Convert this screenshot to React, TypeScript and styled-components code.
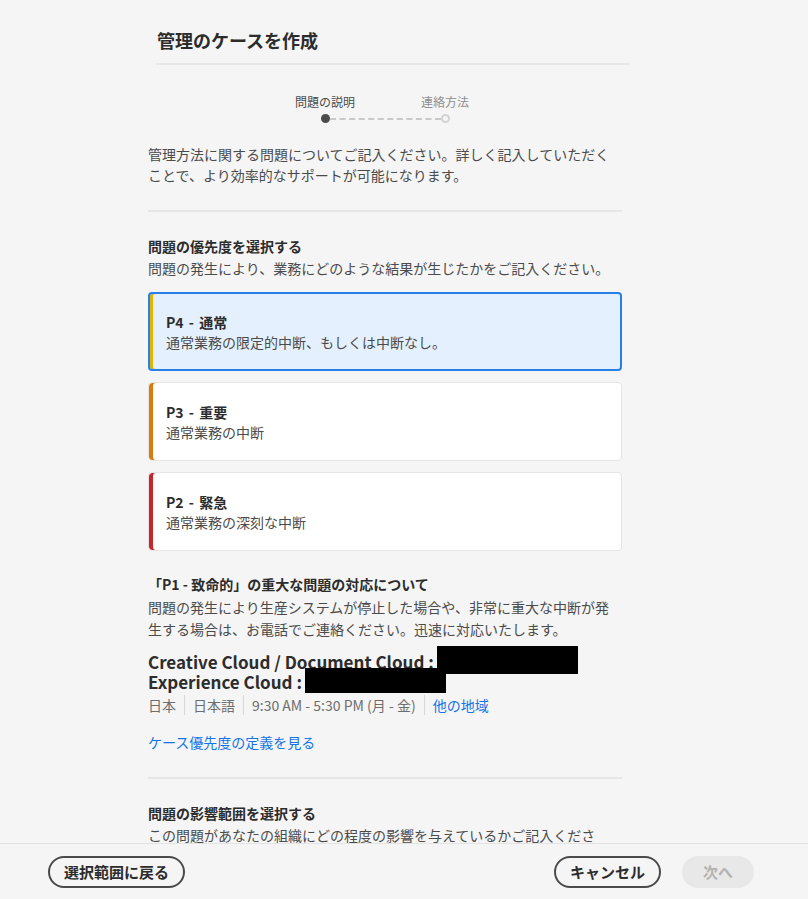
import React from "react";
import styled, { createGlobalStyle, css } from "styled-components";

const Global = createGlobalStyle`
  html, body { margin: 0; padding: 0; background: #f5f5f5; }
  body { font-family: "Noto Sans CJK JP", "Noto Sans", sans-serif; color: #4b4b4b; }
  * { box-sizing: border-box; }
`;

const Page = styled.div`
  height: 100vh;
  display: flex;
  flex-direction: column;
  background: #f5f5f5;
`;

const Scroll = styled.div`
  flex: 1;
  overflow: hidden;
`;

const Header = styled.div`
  margin: 28px 0 0 156px;
  width: 473px;
  padding-bottom: 11px;
  border-bottom: 2px solid #e6e6e6;
`;

const Title = styled.h1`
  margin: 0 0 0 1px;
  font-size: 18px;
  line-height: 24px;
  font-weight: 700;
  color: #2c2c2c;
`;

const Column = styled.div`
  margin-left: 148px;
  width: 474px;
`;

const Steps = styled.div`
  margin-top: 28px;
  display: flex;
  flex-direction: column;
  align-items: center;
`;

const StepLabels = styled.div`
  display: flex;
`;

const StepLabel = styled.div<{ $active?: boolean }>`
  width: 120px;
  text-align: center;
  font-size: 12px;
  line-height: 18px;
  color: ${(p) => (p.$active ? "#4b4b4b" : "#8e8e8e")};
`;

const DotRow = styled.div`
  margin-top: 3px;
  display: flex;
  align-items: center;
`;

const Dot = styled.span<{ $active?: boolean }>`
  width: 9px;
  height: 9px;
  border-radius: 50%;
  ${(p) =>
    p.$active
      ? css`background: #4b4b4b;`
      : css`border: 2px solid #d3d3d3; background: #f5f5f5;`}
`;

const Dash = styled.span`
  width: 111px;
  height: 0;
  border-top: 2px dashed #c9c9c9;
`;

const Text = styled.p<{ $lh?: number }>`
  margin: 0;
  font-size: 14px;
  line-height: ${(p) => p.$lh ?? 21}px;
  color: #4b4b4b;
`;

const Intro = styled(Text)`
  margin-top: 21px;
`;

const Divider = styled.hr<{ $top: number }>`
  margin: ${(p) => p.$top}px 0 0;
  border: 0;
  height: 2px;
  background: #e6e6e6;
`;

const SectionTitle = styled.h2<{ $top: number }>`
  margin: ${(p) => p.$top}px 0 1px;
  font-size: 14px;
  line-height: 21px;
  font-weight: 700;
  color: #2c2c2c;
`;

const Cards = styled.div`
  margin-top: 13px;
  display: flex;
  flex-direction: column;
  gap: 11px;
`;

const Card = styled.div<{ $bar: string; $selected?: boolean }>`
  height: 79px;
  border-radius: 4px;
  display: flex;
  flex-direction: column;
  justify-content: center;
  ${(p) =>
    p.$selected
      ? css`
          border: 2px solid #2680eb;
          background: #e5f0fe;
          padding-left: 16px;
          box-shadow: inset 3px 0 0 ${p.$bar};
        `
      : css`
          border: 1px solid #e4e4e4;
          background: #ffffff;
          padding-left: 17px;
          box-shadow: inset 4px 0 0 ${p.$bar};
        `}
`;

const CardTitle = styled.div`
  font-size: 14px;
  line-height: 20px;
  font-weight: 700;
  color: #2c2c2c;
  word-spacing: 2px;
`;

const CardDesc = styled.div`
  font-size: 14px;
  line-height: 20px;
  color: #4b4b4b;
`;

const Contact = styled.div`
  margin-top: 12px;
`;

const ContactLine = styled.div`
  font-size: 17px;
  line-height: 20px;
  font-weight: 700;
  color: #2c2c2c;
  white-space: nowrap;
`;

const Redact = styled.span<{ $w: number; $h: number; $up: number }>`
  display: inline-block;
  vertical-align: top;
  background: #000;
  width: ${(p) => p.$w}px;
  height: ${(p) => p.$h}px;
  margin-top: -${(p) => p.$up}px;
  margin-bottom: -${(p) => p.$h - p.$up - 8}px;
  margin-left: 3px;
`;

const Meta = styled.div`
  margin-top: 3px;
  display: flex;
  align-items: center;
  font-size: 14px;
  line-height: 20px;
  color: #6e6e6e;
`;

const MetaItem = styled.span`
  padding: 0 8px;
  border-left: 1px solid #d8d8d8;
  &:first-child { padding-left: 0; border-left: 0; }
`;

const Link = styled.a`
  color: #1473e6;
  text-decoration: none;
  font-size: 14px;
  line-height: 20px;
`;

const BlockLink = styled(Link)`
  display: block;
  margin-top: 17px;
`;

const Footer = styled.div`
  height: 56px;
  flex-shrink: 0;
  border-top: 1px solid #e3e3e3;
  background: #f5f5f5;
  display: flex;
  align-items: center;
  padding: 0 54px 0 48px;
`;

const Spacer = styled.div`
  flex: 1;
`;

const Button = styled.button<{ $variant?: "outline" | "disabled" }>`
  height: 32px;
  border-radius: 16px;
  font-family: inherit;
  font-size: 15px;
  font-weight: 700;
  padding: 0 14px;
  min-width: 72px;
  cursor: pointer;
  ${(p) =>
    p.$variant === "disabled"
      ? css`
          border: 0;
          background: #e8e8e8;
          color: #b3b3b3;
        `
      : css`
          border: 2px solid #4b4b4b;
          background: transparent;
          color: #2c2c2c;
        `}
`;

const RightButtons = styled.div`
  display: flex;
  gap: 21px;
`;

const priorities = [
  { bar: "#e0b400", title: "P4 - 通常", desc: "通常業務の限定的中断、もしくは中断なし。", selected: true },
  { bar: "#da7b11", title: "P3 - 重要", desc: "通常業務の中断" },
  { bar: "#c9252d", title: "P2 - 緊急", desc: "通常業務の深刻な中断" },
];

export default function App() {
  return (
    <>
      <Global />
      <Page>
        <Scroll>
          <Header>
            <Title>管理のケースを作成</Title>
          </Header>
          <Column>
            <Steps>
              <StepLabels>
                <StepLabel $active>問題の説明</StepLabel>
                <StepLabel>連絡方法</StepLabel>
              </StepLabels>
              <DotRow>
                <Dot $active />
                <Dash />
                <Dot />
              </DotRow>
            </Steps>
            <Intro>
              管理方法に関する問題についてご記入ください。詳しく記入していただくことで、より効率的なサポートが可能になります。
            </Intro>
            <Divider $top={24} />
            <SectionTitle $top={24}>問題の優先度を選択する</SectionTitle>
            <Text>問題の発生により、業務にどのような結果が生じたかをご記入ください。</Text>
            <Cards>
              {priorities.map((p) => (
                <Card key={p.title} $bar={p.bar} $selected={p.selected}>
                  <CardTitle>{p.title}</CardTitle>
                  <CardDesc>{p.desc}</CardDesc>
                </Card>
              ))}
            </Cards>
            <SectionTitle $top={23}>「P1 - 致命的」の重大な問題の対応について</SectionTitle>
            <Text $lh={22}>
              問題の発生により生産システムが停止した場合や、非常に重大な中断が発生する場合は、お電話でご連絡ください。迅速に対応いたします。
            </Text>
            <Contact>
              <ContactLine>
                Creative Cloud / Document Cloud :<Redact $w={141} $h={28} $up={6} />
              </ContactLine>
              <ContactLine>
                Experience Cloud :<Redact $w={141} $h={25} $up={4} />
              </ContactLine>
            </Contact>
            <Meta>
              <MetaItem>日本</MetaItem>
              <MetaItem>日本語</MetaItem>
              <MetaItem>9:30 AM - 5:30 PM (月 - 金)</MetaItem>
              <MetaItem>
                <Link href="#">他の地域</Link>
              </MetaItem>
            </Meta>
            <BlockLink href="#">ケース優先度の定義を見る</BlockLink>
            <Divider $top={25} />
            <SectionTitle $top={24}>問題の影響範囲を選択する</SectionTitle>
            <Text>この問題があなたの組織にどの程度の影響を与えているかご記入ください。</Text>
          </Column>
        </Scroll>
        <Footer>
          <Button>選択範囲に戻る</Button>
          <Spacer />
          <RightButtons>
            <Button>キャンセル</Button>
            <Button $variant="disabled">次へ</Button>
          </RightButtons>
        </Footer>
      </Page>
    </>
  );
}
